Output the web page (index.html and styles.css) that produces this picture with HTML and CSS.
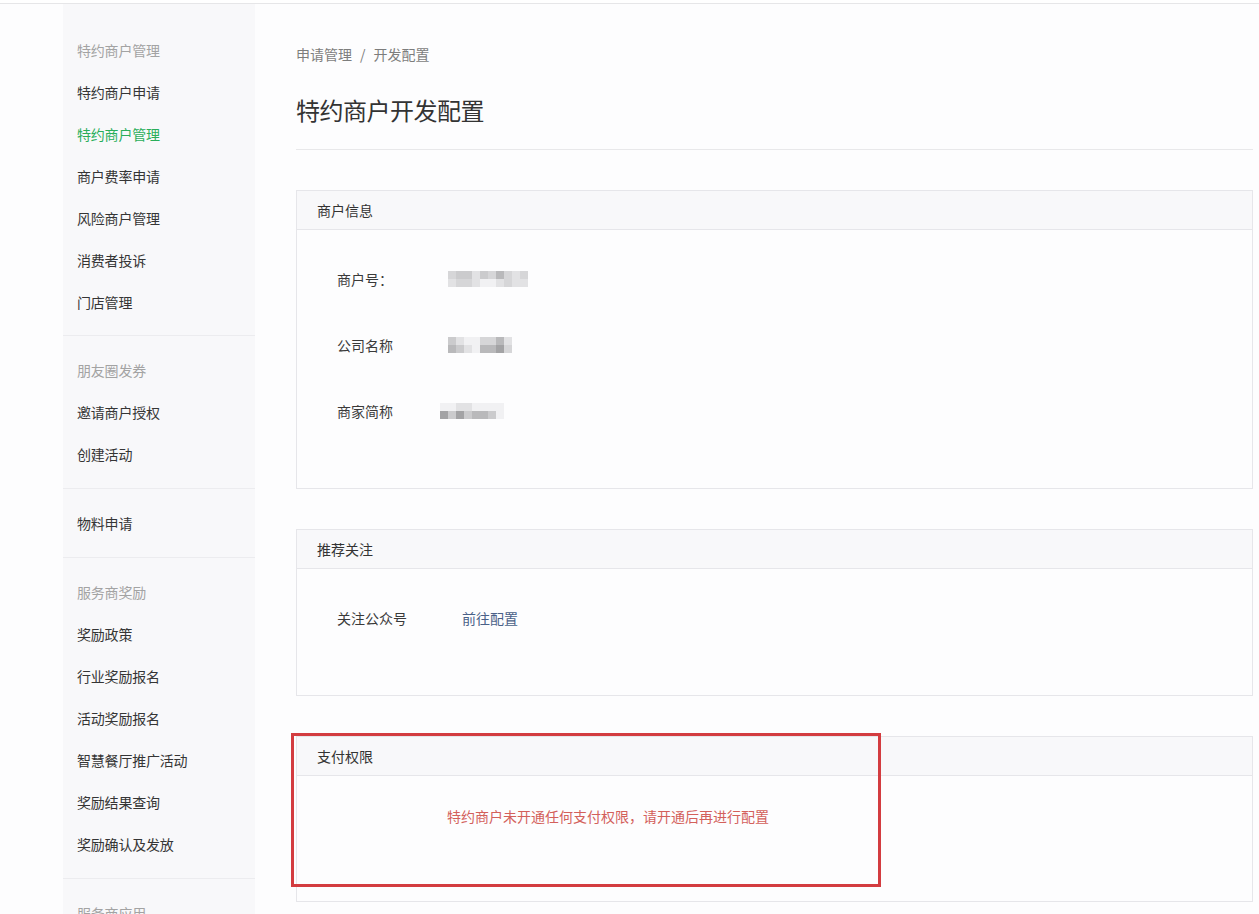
FILE: index.html
```html
<!DOCTYPE html>
<html lang="zh-CN">
<head>
  <meta charset="UTF-8" />
  <title>特约商户开发配置</title>
  <link rel="stylesheet" href="styles.css">
</head>
<body>
  <div class="topline"></div>

  <div class="page">
    <!-- SIDEBAR -->
    <aside class="sidebar">
      <div class="group">
        <div class="group-title">特约商户管理</div>
        <a class="item">特约商户申请</a>
        <a class="item active">特约商户管理</a>
        <a class="item">商户费率申请</a>
        <a class="item">风险商户管理</a>
        <a class="item">消费者投诉</a>
        <a class="item">门店管理</a>
      </div>
      <div class="group">
        <div class="group-title">朋友圈发券</div>
        <a class="item">邀请商户授权</a>
        <a class="item">创建活动</a>
      </div>
      <div class="group">
        <a class="item">物料申请</a>
      </div>
      <div class="group">
        <div class="group-title">服务商奖励</div>
        <a class="item">奖励政策</a>
        <a class="item">行业奖励报名</a>
        <a class="item">活动奖励报名</a>
        <a class="item">智慧餐厅推广活动</a>
        <a class="item">奖励结果查询</a>
        <a class="item">奖励确认及发放</a>
      </div>
      <div class="group">
        <div class="group-title">服务商应用</div>
      </div>
    </aside>

    <!-- MAIN -->
    <main class="main">
      <div class="page-head">
        <div class="crumbs">申请管理<span class="sep">/</span>开发配置</div>
        <h1>特约商户开发配置</h1>
      </div>

      <section class="panel">
        <div class="panel-head">商户信息</div>
        <div class="panel-body">
          <div class="row">
            <span class="label">商户号：</span>
            <span class="mosaic m1">
              <i class="c2"></i><i class="c3"></i><i class="c3"></i><i class="c1"></i><i class="c3"></i><i class="c2"></i><i class="c4"></i><i class="c2"></i><i class="c1"></i><i class="c2"></i>
              <i class="c1"></i><i class="c2"></i><i class="c2"></i><i class="c1"></i><i class="c0"></i><i class="c0"></i><i class="c1"></i><i class="c2"></i><i class="c1"></i><i class="c1"></i>
            </span>
          </div>
          <div class="row">
            <span class="label">公司名称</span>
            <span class="mosaic m2">
              <i class="c3"></i><i class="c1"></i><i class="c0"></i><i class="c0"></i><i class="c2"></i><i class="c2"></i><i class="c4"></i><i class="c1"></i>
              <i class="c4"></i><i class="c3"></i><i class="c1"></i><i class="c0"></i><i class="c4"></i><i class="c4"></i><i class="c5"></i><i class="c2"></i>
            </span>
          </div>
          <div class="row">
            <span class="label">商家简称</span>
            <span class="mosaic m3">
              <i class="c0"></i><i class="c0"></i><i class="c1"></i><i class="c1"></i><i class="c0"></i><i class="c0"></i><i class="c0"></i><i class="c0"></i>
              <i class="c5"></i><i class="c3"></i><i class="c5"></i><i class="c3"></i><i class="c4"></i><i class="c4"></i><i class="c3"></i><i class="c0"></i>
            </span>
          </div>
        </div>
      </section>

      <section class="panel">
        <div class="panel-head">推荐关注</div>
        <div class="panel-body">
          <div class="row">
            <span class="label">关注公众号</span>
            <a class="link">前往配置</a>
          </div>
        </div>
      </section>

      <section class="panel pay">
        <div class="panel-head">支付权限</div>
        <div class="panel-body">
          <p class="warn">特约商户未开通任何支付权限，请开通后再进行配置</p>
        </div>
        <div class="mark" aria-hidden="true"></div>
      </section>
    </main>
  </div>
</body>
</html>
```

FILE: styles.css
```css
/* Reset and base */
* {
  box-sizing: border-box;
  margin: 0;
  padding: 0;
}

body {
  font-family: "Noto Sans CJK SC", "Noto Sans", sans-serif;
  background: #fdfdfe;
  color: #333;
  font-size: 14px;
  overflow: hidden;
}

.topline {
  height: 4px;
  background: #fff;
  border-bottom: 1px solid #e6e6e8;
}

.page {
  display: flex;
  padding-left: 63px;
  align-items: flex-start;
}

/* SIDEBAR */
.sidebar {
  width: 192px;
  flex-shrink: 0;
  background: #f8f8fa;
  padding-top: 12px;
  min-height: 920px;
}

.group {
  padding: 13px 0;
  border-bottom: 1px solid #ececef;
}

.group:first-child {
  padding-bottom: 12px;
}

.group-title,
.item {
  display: block;
  height: 42px;
  line-height: 42px;
  padding-left: 14px;
  font-size: 14px;
  letter-spacing: -0.2px;
}

.group-title {
  color: #a3a3a3;
}

.item {
  color: #353535;
  text-decoration: none;
  cursor: pointer;
}

.item.active {
  color: #2aae5a;
}

/* MAIN */
.main {
  flex: 1;
  padding: 40px 6px 0 41px;
}

.page-head {
  border-bottom: 1px solid #e8e8ea;
  padding-bottom: 23px;
  margin-bottom: 40px;
}

.crumbs {
  line-height: 20px;
  font-size: 14px;
  color: #7d7d7d;
}

.crumbs .sep {
  margin: 0 8px;
}

h1 {
  margin-top: 30px;
  font-size: 24px;
  line-height: 32px;
  font-weight: 400;
  color: #333;
  letter-spacing: -0.5px;
}

/* Panels */
.panel {
  position: relative;
  border: 1px solid #e6e6ea;
  background: #fdfdfe;
  margin-bottom: 40px;
}

.panel + .panel + .panel {
  margin-top: 1px;
}

.panel-head {
  height: 39px;
  line-height: 38px;
  padding-left: 20px;
  background: #f8f8fa;
  border-bottom: 1px solid #e6e6ea;
  font-size: 14px;
  color: #333;
}

.panel-body {
  padding: 16px 0 44px 40px;
}

.row {
  display: flex;
  align-items: center;
  height: 66px;
}

.label {
  margin-right: 55px;
  color: #3a3a3a;
}

.link {
  color: #4a6188;
  text-decoration: none;
  cursor: pointer;
}

/* blurred values */
.mosaic {
  display: grid;
  grid-template-columns: repeat(10, 8px);
  grid-auto-rows: 8px;
  filter: blur(0.6px);
}

.mosaic.m2,
.mosaic.m3 {
  grid-template-columns: repeat(8, 8px);
}

.mosaic.m3 {
  margin-left: -8px;
}

.mosaic i { display: block; }
.mosaic .c0 { background: #f1f1f3; }
.mosaic .c1 { background: #e2e2e4; }
.mosaic .c2 { background: #d6d6d8; }
.mosaic .c3 { background: #cbcbcd; }
.mosaic .c4 { background: #b9b9bb; }
.mosaic .c5 { background: #a3a3a5; }

/* Payment panel */
.pay .panel-body {
  padding: 30px 0 75px 150px;
}

.warn {
  line-height: 20px;
  font-size: 14px;
  color: #d3605b;
}

/* annotation box drawn over the screenshot */
.mark {
  position: absolute;
  left: -6px;
  top: -4px;
  width: 590px;
  height: 154px;
  border: 3px solid #d33c40;
  pointer-events: none;
}
```
